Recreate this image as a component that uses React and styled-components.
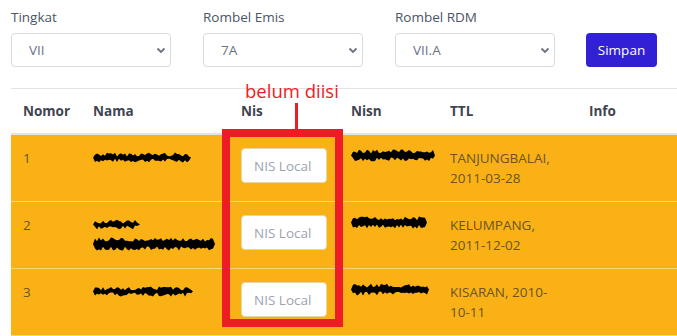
import React from "react";
import styled, { createGlobalStyle } from "styled-components";

const GlobalStyle = createGlobalStyle`
  * { box-sizing: border-box; }
  body {
    margin: 0;
    background: #ffffff;
    font-family: "Open Sans", "Noto Sans", sans-serif;
    overflow: hidden;
  }
`;

const students = [
  { no: 1, name: [98], nisn: 84, ttl: "TANJUNGBALAI, 2011-03-28" },
  { no: 2, name: [47, 122], nisn: 76, ttl: "KELUMPANG, 2011-12-02" },
  { no: 3, name: [100], nisn: 78, ttl: "KISARAN, 2010-10-11" },
];

// rough black marker blob used to hide names / numbers
function Scribble({ width, height = 12, seed = 1 }) {
  let s = seed * 9301 + 49297;
  const rnd = () => {
    s = (s * 9301 + 49297) % 233280;
    return s / 233280;
  };
  const top = [];
  const bottom = [];
  const step = 2;
  for (let x = 2; x <= width - 2; x += step) {
    top.push(`${x},${0.5 + rnd() * 4}`);
    bottom.unshift(`${x},${height - 0.5 - rnd() * 4}`);
  }
  const pts = [`0,${height / 2}`, ...top, `${width},${height / 2}`, ...bottom].join(" ");
  return (
    <ScribbleSvg width={width} height={height} viewBox={`0 0 ${width} ${height}`}>
      <polygon points={pts} fill="#000" />
    </ScribbleSvg>
  );
}

function Chevron() {
  return (
    <svg width="10" height="7" viewBox="0 0 10 7">
      <path d="M1.5 1.5 L5 5 L8.5 1.5" fill="none" stroke="#6b7280" strokeWidth="1.8" />
    </svg>
  );
}

function App() {
  return (
    <Page>
      <GlobalStyle />
      <Filters>
        <Field>
          <Label>Tingkat</Label>
          <Select>
            <span>VII</span>
            <Chevron />
          </Select>
        </Field>
        <Field>
          <Label>Rombel Emis</Label>
          <Select>
            <span>7A</span>
            <Chevron />
          </Select>
        </Field>
        <Field>
          <Label>Rombel RDM</Label>
          <Select>
            <span>VII.A</span>
            <Chevron />
          </Select>
        </Field>
        <SaveButton>Simpan</SaveButton>
      </Filters>

      <TableWrap>
        <Table>
          <colgroup>
            <col style={{ width: 70 }} />
            <col style={{ width: 148 }} />
            <col style={{ width: 110 }} />
            <col style={{ width: 99 }} />
            <col style={{ width: 139 }} />
            <col />
          </colgroup>
          <thead>
            <tr>
              <Th>Nomor</Th>
              <Th>Nama</Th>
              <Th>Nis</Th>
              <Th>Nisn</Th>
              <Th>TTL</Th>
              <Th>Info</Th>
            </tr>
          </thead>
          <tbody>
            {students.map((st) => (
              <Row key={st.no}>
                <Td>{st.no}</Td>
                <Td>
                  <NameStack>
                    {st.name.map((w, i) => (
                      <Scribble key={i} width={w} height={i === 1 ? 14 : 11} seed={st.no * 7 + i} />
                    ))}
                  </NameStack>
                </Td>
                <Td>
                  <NisInput placeholder="NIS Local" />
                </Td>
                <Td>
                  <Scribble width={st.nisn} height={13} seed={st.no * 13} />
                </Td>
                <Td>{st.ttl}</Td>
                <Td />
              </Row>
            ))}
          </tbody>
        </Table>

        <Note>
          <NoteText>belum diisi</NoteText>
          <NoteLine />
          <NoteBox />
        </Note>
      </TableWrap>
    </Page>
  );
}

export default App;

const Page = styled.div`
  width: 677px;
  height: 336px;
  padding: 8px 0 0 11px;
  overflow: hidden;
`;

const Filters = styled.div`
  display: flex;
  align-items: flex-end;
  gap: 32px;
`;

const Field = styled.div`
  display: flex;
  flex-direction: column;
  gap: 6px;
`;

const Label = styled.label`
  font-size: 13.5px;
  line-height: 19px;
  color: #4b5563;
`;

const Select = styled.div`
  width: 160px;
  height: 34px;
  display: flex;
  align-items: center;
  justify-content: space-between;
  padding: 0 4px 0 17px;
  border: 1px solid #d8dbe0;
  border-radius: 4px;
  background: #fff;
  font-size: 13.5px;
  color: #6b7280;
`;

const SaveButton = styled.button`
  height: 34px;
  width: 71px;
  margin-left: -1px;
  border: none;
  border-radius: 4px;
  background: #3120d4;
  color: #fff;
  font-family: inherit;
  font-size: 13.5px;
  cursor: pointer;
`;

const TableWrap = styled.div`
  position: relative;
  margin-top: 21px;
`;

const Table = styled.table`
  width: 666px;
  border-collapse: collapse;
  table-layout: fixed;
  border-top: 1px solid #e1e3e6;
`;

const Th = styled.th`
  text-align: left;
  padding: 12px;
  font-size: 13.5px;
  line-height: 20px;
  font-weight: 700;
  color: #3f4451;
  border-bottom: 2px solid #e1e3e6;
`;

const Row = styled.tr`
  background: #f9b116;
  border-bottom: 1px solid #fbd67e;
`;

const Td = styled.td`
  vertical-align: top;
  padding: 13px 12px;
  font-size: 13.5px;
  line-height: 20px;
  color: #6b5421;
`;

const NameStack = styled.div`
  display: flex;
  flex-direction: column;
  gap: 6px;
  padding-top: 3px;
`;

const ScribbleSvg = styled.svg`
  display: block;
  margin-top: 1px;
`;

const NisInput = styled.input`
  width: 86px;
  height: 35px;
  padding: 0 12px;
  border: 1px solid #e5d6a8;
  border-radius: 4px;
  background: #fff;
  font-family: inherit;
  font-size: 13.5px;
  &::placeholder {
    color: #9ca3af;
  }
`;

const Note = styled.div`
  position: absolute;
  left: 211px;
  top: -6px;
  width: 121px;
  display: flex;
  flex-direction: column;
  align-items: flex-start;
  pointer-events: none;
`;

const NoteText = styled.div`
  margin-left: 23px;
  margin-bottom: 3px;
  font-size: 18.5px;
  line-height: 18px;
  color: #ee1c24;
  white-space: nowrap;
`;

const NoteLine = styled.div`
  width: 3px;
  height: 26px;
  margin-left: 73px;
  background: #ee1c24;
`;

const NoteBox = styled.div`
  width: 121px;
  height: 198px;
  border: 8px solid #ee1c24;
`;
